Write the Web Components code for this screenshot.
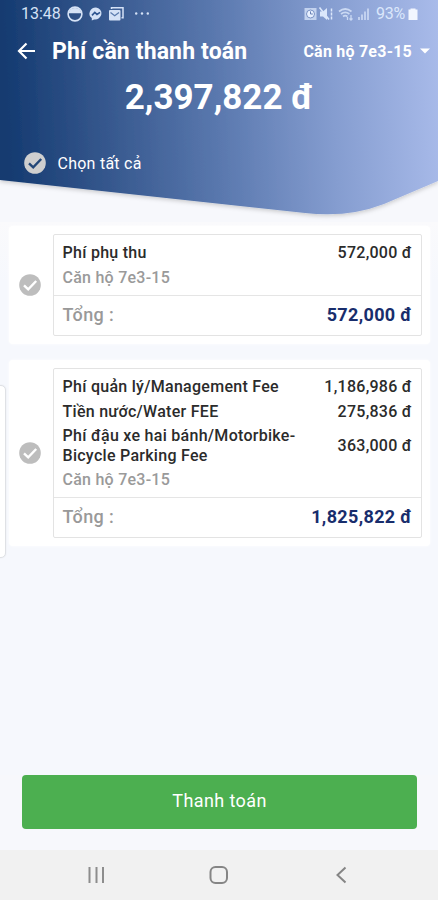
<!DOCTYPE html>
<html lang="vi"><head><meta charset="utf-8"><title>Phí cần thanh toán</title>
<style>html,body{margin:0;height:100%;overflow:hidden}body{font-family:Roboto,"Noto Sans",sans-serif}</style></head>
<body><payment-screen></payment-screen>
<script>
const define=(name,html)=>{
  const t=document.createElement('template');t.innerHTML=html;
  customElements.define(name,class extends HTMLElement{
    constructor(){super();this.attachShadow({mode:'open'}).append(t.content.cloneNode(true))}
  });
};
define('check-mark',`<style>:host{display:block;width:22px;height:22px;color:#bdbdbd;--tick:#fff}svg{display:block;width:100%;height:100%}</style>
<svg viewBox="0 0 22 22"><circle cx="11" cy="11" r="10.8" fill="currentColor"/><path d="M5 11.3 9.2 15.3 17.2 7" fill="none" style="stroke:var(--tick)" stroke-width="2.4"/></svg>`);
define('status-bar',`<style>:host{display:flex;justify-content:space-between;height:28px;padding:0 20px 0 21px;color:#d5e2f6;font-size:16px;line-height:28px}
div{display:flex;align-items:center}svg{display:block;fill:none;stroke:currentColor}.t{width:39px;margin-right:7px;white-space:nowrap}.r{color:#dbe7fb;}.p{letter-spacing:-.2px;width:29px;white-space:nowrap;margin-left:5px}</style>
<div><span class="t">13:48</span><svg width="84" height="18" viewBox="0 0 84 18">
<circle cx="8" cy="9" r="6.9" stroke-width="1.6"/><path d="M1.500 8.300a6.700 6.900 0 0 1 13 0Z" fill="currentColor" stroke="none"/>
<path d="M29 2.5a6.500 6 0 0 0-4.200 10.6v2.400l2.300-1.100A6.400 6 0 1 0 29 2.500Z" fill="currentColor" stroke="none"/><path d="m25 10.4 2.800-3 2.200 2 3-2" stroke="#305690" stroke-width="1.600"/>
<path d="M44.500 4V2.800H56v10h-1.500" stroke-width="1.500"/><rect x="42" y="5" width="11.500" height="10.500" rx="1" fill="currentColor" stroke="none"/><path d="m43.500 7.500 4.200 3.200L52 7.500" stroke="#5b7bad" stroke-width="1.300"/>
<g fill="currentColor" stroke="none"><circle cx="69.200" cy="8.500" r="1.200"/><circle cx="75" cy="8.500" r="1.200"/><circle cx="80.800" cy="8.500" r="1.200"/></g></svg></div>
<div class="r"><svg width="67" height="18" viewBox="0 0 67 18">
<path d="M.5 3h12v12H.5z" fill="currentColor" stroke="none" opacity=".75"/><circle cx="6.500" cy="9" r="4" fill="#e8f0ff" stroke="#7a92c4" stroke-width="1"/><path d="M6.500 6.400V9h2.300" stroke="#6881b5"/>
<path d="M16 6.500h3l4-3.500v12l-4-3.500h-3z" fill="currentColor" stroke="none"/><path d="m15.500 2.500 9.500 12" stroke-width="1.600"/><path d="M27.500 3.500v11" stroke-width="1.500" stroke-dasharray="3 1"/>
<g opacity=".8"><path d="M35 6.500q6.200-5 12.500 0M37 9q4.200-3.300 8.400 0M39 11.500q2.200-1.700 4.400 0" stroke-width="1.700"/><path d="M47 10v5m-1.500-1.500L47 15l1.500-1.500M43.500 15v-3" stroke-width="1.300"/></g>
<g fill="currentColor" stroke="none" opacity=".65"><path d="M54 12h2v3h-2zM57 9.500h2V15h-2zM60 6.500h2V15h-2zM63 3.500h2V15h-2z"/></g></svg>
<span class="p">93%</span><svg width="10" height="14" viewBox="0 0 10 14" style="margin-left:3px"><path d="M.5 2.500H2.500V1.500h5v1h2V13h-9Z" fill="#f2f6ff" stroke="none"/></svg></div>`);
define('title-bar',`<style>:host{display:flex;align-items:center;height:46px;padding:0 8px 0 17px;color:#fff}svg{display:block}
.a{margin-right:16px}h1{font-size:23px;letter-spacing:.14px;font-weight:700;margin:0;flex:1;white-space:nowrap}b{font-size:16px;letter-spacing:.23px;font-weight:700;white-space:nowrap;margin-right:8px}</style>
<svg class="a" width="19" height="20" viewBox="0 0 19 20" fill="none" stroke="#fff" stroke-width="2.200"><path d="M18 10H2M9.500 2.500 2 10l7.500 7.500"/></svg><h1>Phí cần thanh toán</h1><b>Căn hộ 7e3-15</b><svg width="10" height="6"><path d="M0 .5h10L5 5.500Z" fill="#fff"/></svg>`);
define('balance-header',`<style>:host{display:grid;height:222px;flex:none}svg,.c{grid-area:1/1}.c{display:flex;flex-direction:column;color:#fff}
.s{font-size:35px;line-height:44px;font-weight:700;text-align:center;white-space:nowrap;margin-top:2px}
.k{display:flex;align-items:center;gap:12px;margin:31px 0 0 23.500px;font-size:16px;letter-spacing:.25px;height:24px}check-mark{color:#cfcfcf;--tick:#234778}</style>
<svg width="438" height="222"><defs><linearGradient id="g" gradientUnits="userSpaceOnUse" x1="0" y1="10" x2="438" y2="-10"><stop offset="0" stop-color="#143a70"/><stop offset=".1" stop-color="#23477d"/><stop offset=".5" stop-color="#5c7ab0"/><stop offset=".75" stop-color="#859dd0"/><stop offset="1" stop-color="#a9bbea"/></linearGradient>
<filter id="s" x="-5%" y="-5%" width="110%" height="115%"><feDropShadow dx="0" dy="1.500" stdDeviation="2" flood-opacity=".2"/></filter></defs>
<path d="M0 0H438V181L384 204Q348 218 305 213L0 180Z" fill="url(#g)" filter="url(#s)"/></svg>
<div class="c"><status-bar></status-bar><title-bar></title-bar><div class="s">2,397,822 đ</div><div class="k"><check-mark></check-mark><span>Chọn tất cả</span></div></div>`);
define('fee-row',`<style>:host{display:flex;justify-content:space-between;align-items:center;font-size:16px;letter-spacing:.28px;font-weight:500;line-height:19.500px;color:#2b2b2b;margin-bottom:5px;white-space:nowrap}</style><span><slot></slot></span><span><slot name="amount"></slot></span>`);
define('fee-card',`<style>:host{display:flex;align-items:center;background:#fff;border-radius:4px;margin:0 8px 0 9px;padding:8px 8px 8px 10px;box-sizing:border-box;box-shadow:0 0 3px #fff}
.b{flex:1;margin-left:12px;border:1.500px solid #e3e3e3;border-radius:2px;align-self:stretch;display:flex;flex-direction:column;box-sizing:border-box}
.i{padding:8px 9px 0 8.500px;flex:1}.u{color:#9a9a9a;font-size:16px;letter-spacing:.25px;font-weight:500;line-height:20px}
.t{height:39px;border-top:1.500px solid #e5e5e5;display:flex;align-items:center;justify-content:space-between;padding:0 9px 2px 8.500px;box-sizing:border-box;height:40px;font-size:18px;letter-spacing:.35px;font-weight:500;color:#999}.t b{color:#182d6c;font-weight:700}</style>
<check-mark></check-mark><div class="b"><div class="i"><slot></slot><div class="u"><slot name="unit"></slot></div></div><div class="t"><span>Tổng :</span><b><slot name="total"></slot></b></div></div>`);
define('pay-button',`<style>:host{display:flex;height:54px;margin:0 21px 0 22px;flex:none}button{flex:1;border:0;border-radius:4px;background:#4caf50;color:#fff;font:400 18px Roboto,sans-serif;letter-spacing:.4px;padding:0 0 3px}</style><button><slot></slot></button>`);
define('nav-bar',`<style>:host{display:block;height:50px;background:#f1f1f1;margin-top:21px;flex:none}</style>
<svg width="438" height="50" fill="none" stroke="#858585" stroke-width="2"><path d="M89.500 17v16M96.500 17v16M103 17v16" stroke="#8d8d8d"/><rect x="210.500" y="17" width="16.500" height="16" rx="5"/><path d="m345.500 17.500-8 7.500 8 7.500"/></svg>`);
define('edge-handle',`<style>:host{position:absolute;left:-6px;top:385px;width:9.500px;height:171px;border:1.500px solid #dfe1e5;border-radius:5px;background:#fff;box-shadow:0 0 2px #0001}</style>`);
define('payment-screen',`<style>:host{display:flex;flex-direction:column;width:438px;height:900px;position:relative;overflow:hidden;background:#f7f8fc}main{flex:1;display:flex;flex-direction:column;gap:16px;padding-top:4px;background:linear-gradient(#fafafc,#f6f8fd 60px)}.one{height:118px}.two{height:186px}</style>
<balance-header></balance-header><main>
<fee-card class="one"><fee-row>Phí phụ thu<span slot="amount">572,000 đ</span></fee-row><span slot="unit">Căn hộ 7e3-15</span><span slot="total">572,000 đ</span></fee-card>
<fee-card class="two"><fee-row>Phí quản lý/Management Fee<span slot="amount">1,186,986 đ</span></fee-row><fee-row>Tiền nước/Water FEE<span slot="amount">275,836 đ</span></fee-row><fee-row>Phí đậu xe hai bánh/Motorbike-<br>Bicycle Parking Fee<span slot="amount">363,000 đ</span></fee-row><span slot="unit">Căn hộ 7e3-15</span><span slot="total">1,825,822 đ</span></fee-card>
</main><pay-button>Thanh toán</pay-button><nav-bar></nav-bar><edge-handle></edge-handle>`);
</script></body></html>
